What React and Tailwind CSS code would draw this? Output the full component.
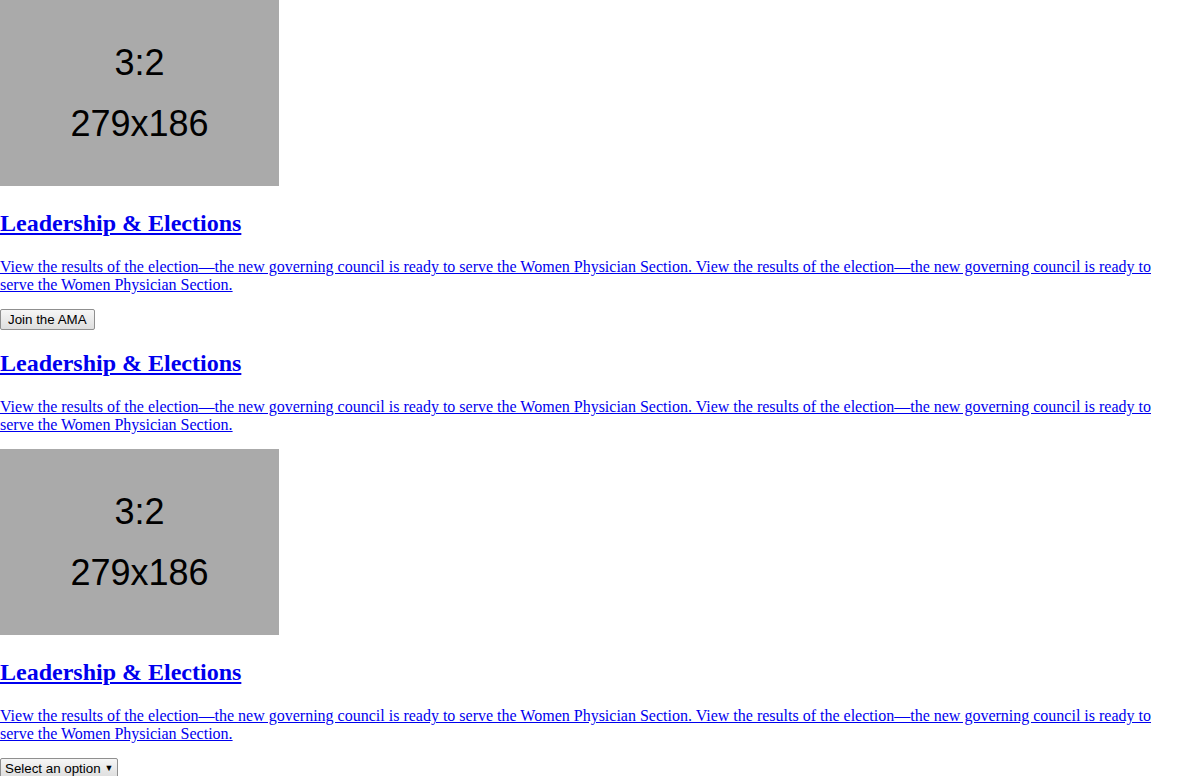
import React from 'react';

const blurb =
  'View the results of the election\u2014the new governing council is ready to serve the Women Physician Section. View the results of the election\u2014the new governing council is ready to serve the Women Physician Section.';

const Placeholder = () => (
  <div className="w-[279px] h-[186px] bg-[#aaaaaa] flex flex-col items-center justify-center gap-5 text-black font-['Liberation_Sans',Arial,sans-serif] text-[36px] leading-[41px]">
    <span>3:2</span>
    <span>279x186</span>
  </div>
);

const Teaser = ({ top = 'mt-[24px]', bottom = 'mb-4' }) => (
  <>
    <h2 className={`${top} mb-[21px] text-[24px] font-bold leading-[27px]`}>
      <a href="#" className="text-[#0000ee] underline">Leadership &amp; Elections</a>
    </h2>
    <p className={`mt-0 ${bottom} text-base leading-[18px]`}>
      <a href="#" className="text-[#0000ee] underline">{blurb}</a>
    </p>
  </>
);

export default function App() {
  return (
    <div className="bg-white text-black font-['Liberation_Serif','Times_New_Roman',serif] text-base">
      <Placeholder />
      <Teaser bottom="mb-[13px]" />
      <div className="h-[21px]">
        <button className="h-[21px] px-[7px] border border-[#8f8f8f] rounded-[2px] bg-gradient-to-b from-[#f6f6f6] to-[#dedede] text-[13.33px] leading-[17px] text-black font-['Liberation_Sans',Arial,sans-serif]">
          Join the AMA
        </button>
      </div>
      <Teaser top="mt-[22px]" bottom="mb-[15px]" />
      <Placeholder />
      <Teaser bottom="mb-[15px]" />
      <div className="h-[21px]">
        <button className="h-[20px] pl-[4px] pr-[3px] border border-[#8f8f8f] rounded-[2px] bg-gradient-to-b from-[#f6f6f6] to-[#dedede] text-[13.33px] leading-[17px] text-black font-['Liberation_Sans',Arial,sans-serif] flex items-center gap-[4px]">
          <span>Select an option</span>
          <span className="text-[9px] leading-none">▼</span>
        </button>
      </div>
    </div>
  );
}
